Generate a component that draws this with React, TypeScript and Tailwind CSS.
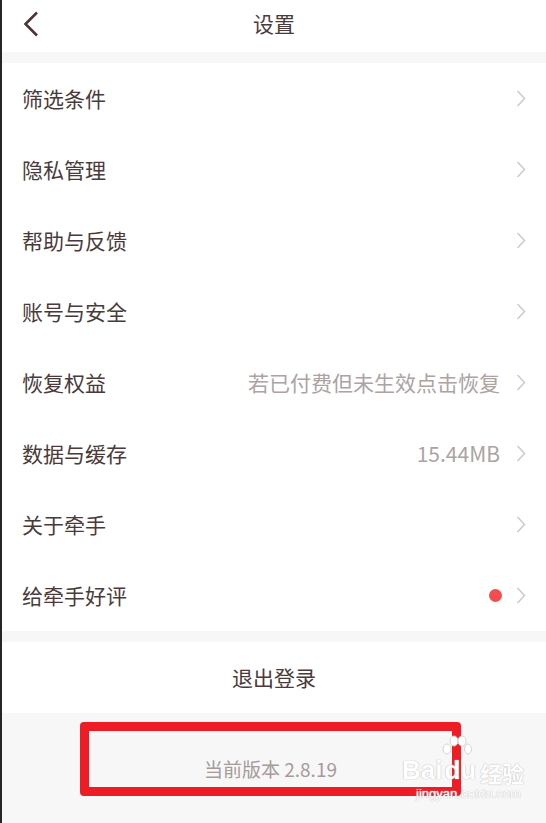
const rows = [
  { id: 'filter', label: '筛选条件' },
  { id: 'privacy', label: '隐私管理' },
  { id: 'help', label: '帮助与反馈' },
  { id: 'account', label: '账号与安全' },
  { id: 'restore', label: '恢复权益', value: '若已付费但未生效点击恢复' },
  { id: 'cache', label: '数据与缓存', value: '15.44MB' },
  { id: 'about', label: '关于牵手' },
  { id: 'rate', label: '给牵手好评', dot: true }
]

const Arrow = () => (
  <svg width="10" height="17" viewBox="0 0 10 17" className="shrink-0">
    <polyline points="1.5,1 8.5,8.5 1.5,16" fill="none" stroke="#cccccc" strokeWidth="1.6" />
  </svg>
)

const App = () => {
  return (
    <div className="min-h-screen bg-[#f7f7f7] border-l-2 border-[#262626] font-['Noto_Sans_CJK_SC','Noto_Sans',sans-serif] text-[#4b3a3a]">
      {/* Header */}
      <div className="relative h-[52px] bg-white flex items-center justify-center">
        <button className="absolute left-[21px] top-[11px]">
          <svg width="16" height="26" viewBox="0 0 16 26">
            <polyline points="14,1.5 2.5,13 14,24.5" fill="none" stroke="#4b3535" strokeWidth="2.6" />
          </svg>
        </button>
        <h1 className="text-[21px] leading-none -mt-[5px]">设置</h1>
      </div>

      <div className="h-[11px]" />

      {/* Settings list */}
      <div className="bg-white">
        {rows.map((row) => (
          <div key={row.id} className="h-[71px] flex items-center pl-[20px] pr-[20px]">
            <span className="flex-1 text-[21px] leading-none">{row.label}</span>
            {row.value && (
              <span className="text-[21px] leading-none text-[#ada3a3] mr-[16px]">{row.value}</span>
            )}
            {row.dot && <span className="w-[13px] h-[13px] rounded-full bg-[#f44d4f] mr-[14px]" />}
            <Arrow />
          </div>
        ))}
      </div>

      <div className="h-[11px]" />

      {/* Logout */}
      <div className="h-[71px] bg-white flex items-center justify-center">
        <span className="text-[21px] leading-none">退出登录</span>
      </div>

      {/* Version */}
      <div className="relative pt-[9px] pl-[78px]">
        <div className="w-[381px] h-[74px] border-[9px] border-[#ee1c25] rounded-[4px] flex items-center justify-center pt-[18px]">
          <span className="text-[19px] text-[#a69a9a] leading-none">当前版本 2.8.19</span>
        </div>

        {/* watermark */}
        <div className="absolute left-[400px] top-[44px] flex flex-col items-start select-none">
          <div className="flex items-end gap-[2px] text-white font-['Liberation_Sans',sans-serif] font-bold text-[26px] leading-none [text-shadow:0_0_1px_#bdbdbd,0_0_1px_#bdbdbd]">
            <span>Bai</span>
            <span className="relative">
              <svg width="30" height="24" viewBox="0 0 30 24" className="absolute -top-[22px] left-[-2px]">
                <g fill="white" stroke="#d4d4d4" strokeWidth="1">
                  <ellipse cx="5" cy="14" rx="4" ry="5" />
                  <ellipse cx="12" cy="6" rx="4" ry="5" />
                  <ellipse cx="20" cy="6" rx="4" ry="5" />
                  <ellipse cx="26" cy="14" rx="3.5" ry="5" />
                </g>
              </svg>
              du
            </span>
            <span className="font-['Noto_Sans_CJK_SC',sans-serif] text-[22px] ml-[2px]">经验</span>
          </div>
          <span className="mt-[4px] ml-[14px] text-[13px] leading-none text-white font-['Liberation_Sans',sans-serif] [text-shadow:0_0_1px_#c4c4c4,0_0_1px_#c4c4c4]">
            jingyan.baidu.com
          </span>
        </div>
      </div>
    </div>
  )
}

export default App
